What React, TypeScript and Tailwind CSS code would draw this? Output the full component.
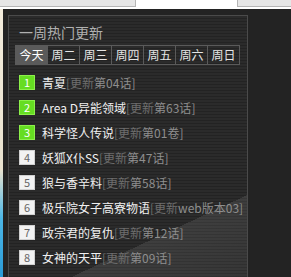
import React from "react";

const tabs = ["今天", "周二", "周三", "周四", "周五", "周六", "周日"];

const items = [
  { n: 1, title: "青夏", tag: "第04话" },
  { n: 2, title: "Area D异能领域", tag: "第63话" },
  { n: 3, title: "科学怪人传说", tag: "第01卷" },
  { n: 4, title: "妖狐X仆SS", tag: "第47话" },
  { n: 5, title: "狼与香辛料", tag: "第58话" },
  { n: 6, title: "极乐院女子高寮物语", tag: "web版本03" },
  { n: 7, title: "政宗君的复仇", tag: "第12话" },
  { n: 8, title: "女神的天平", tag: "第09话" },
];

const font = { fontFamily: '"Noto Sans CJK SC", "Liberation Sans", sans-serif' };

export default function App() {
  return (
    <div className="w-[291px] h-[277px] bg-[#232323] flex flex-col overflow-hidden" style={font}>
      <div className="h-[9px] bg-white flex justify-between shrink-0">
        <div className="w-[136px] h-[7px] bg-[#e6e6e6] border-r border-b border-[#b5b5b5]" />
        <div className="w-[54px] h-[7px] bg-[#e6e6e6] border-l border-b border-[#b5b5b5]" />
      </div>
      <div className="flex flex-1">
        <div className="w-[3px] bg-[linear-gradient(180deg,#f3ecdc_0%,#e9e2cf_60%,#4db8e8_78%,#2a9ad6_100%)]" />
        <div className="w-[5px]" />
        <div className="relative mt-[6px] w-[240px] border-t border-x border-[#4a4a4a] bg-[repeating-linear-gradient(180deg,#2b2b2b_0px,#2b2b2b_2px,#232323_2px,#232323_3px)] overflow-hidden">
          <div className="absolute inset-0 bg-[linear-gradient(155deg,transparent_78%,rgba(255,255,255,0.09)_78%,rgba(255,255,255,0.05)_100%)] pointer-events-none" />
          <div className="relative">
            <div className="pl-[10px] pt-[7px] text-[14px] leading-[18px] text-[#b0b0b0]">一周热门更新</div>
            <div className="flex ml-[6px] mt-[4px] w-[225px] border border-[#5a5a5a]">
              {tabs.map((t, i) => (
                <div
                  key={t}
                  className={
                    i === 0
                      ? "flex-1 h-[18px] flex items-center justify-center text-[12px] text-white bg-[#5a5a5a]"
                      : "flex-1 h-[18px] flex items-center justify-center text-[12px] text-[#e6e6e6] border-l border-[#5a5a5a]"
                  }
                >
                  {t}
                </div>
              ))}
            </div>
            <div className="flex flex-col gap-[10px] pl-[10px] mt-[10px]">
              {items.map((it) => (
                <div key={it.n} className="flex items-center h-[15px]">
                  <div
                    className={
                      it.n <= 3
                        ? "w-[16px] h-[15px] flex items-center justify-center text-[11px] text-white bg-[#66dd22] border border-[#8cf04a]"
                        : "w-[16px] h-[15px] flex items-center justify-center text-[11px] text-[#666] bg-[#f2f2f2] border border-[#d0d0d0]"
                    }
                  >
                    {it.n}
                  </div>
                  <div className="ml-[7px] text-[12px] whitespace-nowrap text-[#f0f0f0]">
                    {it.title}
                    <span className="text-[#6e6e6e]">[更新</span>
                    <span className="text-[#8e8e8e]">{it.tag}]</span>
                  </div>
                </div>
              ))}
            </div>
          </div>
        </div>
      </div>
    </div>
  );
}
